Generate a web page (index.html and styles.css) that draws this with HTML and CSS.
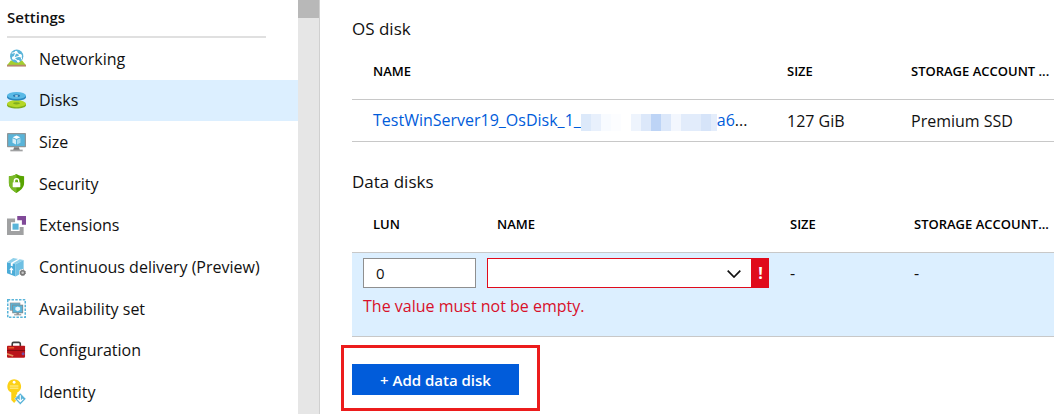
FILE: index.html
```html
<!DOCTYPE html>
<html lang="en">
<head>
  <meta charset="UTF-8">
  <meta name="viewport" content="width=device-width, initial-scale=1.0">
  <title>Disks</title>
  <link rel="stylesheet" href="styles.css">
</head>
<body>
  <div class="blade">
    <nav class="sidebar">
      <h2 class="sidebar-title">Settings</h2>
      <ul class="menu">
        <li>
          <a href="#" class="menu-item">
            <svg class="icon" viewBox="0 0 20 20">
              <path d="M0 17l4-5h12l4 5z" fill="#a4ce2e"/>
              <rect y="16.6" width="20" height="1.9" fill="#b58a68"/>
              <circle cx="10.2" cy="7.5" r="7" fill="#59b4d9"/>
              <path d="M5 4.500l4.500-1 5 3.500 1 4M9.500 3.500l-2.500 6 5 3.500M14.500 7l-7.500 2.500" fill="none" stroke="#fff" stroke-width="1.1"/>
              <circle cx="9.500" cy="3.500" r="1.600" fill="#fff"/>
              <circle cx="14" cy="7" r="1.700" fill="#fff"/>
              <circle cx="7" cy="9.500" r="1.800" fill="#fff"/>
              <circle cx="12" cy="13" r="1.300" fill="#fff"/>
            </svg>
            Networking
          </a>
        </li>
        <li>
          <a href="#" class="menu-item active">
            <svg class="icon" viewBox="0 0 20 20">
              <path d="M0 13.500v1.500c0 2 4.500 3.500 10 3.500s10-1.500 10-3.500v-1.500z" fill="#7fae1d"/>
              <ellipse cx="10" cy="13.300" rx="10" ry="3.700" fill="#b5d727"/>
              <ellipse cx="10" cy="13" rx="3.500" ry="1.200" fill="#7fae1d"/>
              <path d="M0 5v1.500c0 2 4.500 3.500 10 3.500s10-1.500 10-3.500v-1.500z" fill="#2a86bf"/>
              <ellipse cx="10" cy="4.800" rx="10" ry="3.700" fill="#59b9e6"/>
              <ellipse cx="10" cy="5" rx="3.600" ry="1.400" fill="#1c6fa8"/>
              <ellipse cx="10" cy="5.300" rx="2" ry=".7" fill="#cfeafa"/>
            </svg>
            Disks
          </a>
        </li>
        <li>
          <a href="#" class="menu-item">
            <svg class="icon" viewBox="0 0 20 20">
              <rect y="0" width="20" height="15" rx=".8" fill="#8f9699"/>
              <rect x="1.300" y="1.300" width="17.400" height="12.400" fill="#59b4d9"/>
              <path d="M7.500 15h5l1 3h-7z" fill="#7a7a7a"/>
              <rect x="3.500" y="17.500" width="13" height="1.800" fill="#a0a1a2"/>
              <path d="M10 2.600l4 1.900-4 1.900-4-1.900z" fill="#fff"/>
              <path d="M5.800 5.400l3.700 1.800v5l-3.700-2z" fill="#d5edf7"/>
              <path d="M14.200 5.400l-3.700 1.800v5l3.700-2z" fill="#a6d8ec"/>
            </svg>
            Size
          </a>
        </li>
        <li>
          <a href="#" class="menu-item">
            <svg class="icon" viewBox="0 0 20 20">
              <path d="M10 0c2.500 1.700 5 2.300 8 2.300v7.200c0 5-4 8-8 10.500-4-2.500-8-5.500-8-10.500V2.300c3 0 5.500-.6 8-2.300z" fill="#57a300"/>
              <path d="M10 0v20c-4-2.500-8-5.500-8-10.500V2.300c3 0 5.500-.6 8-2.300z" fill="#7ab929"/>
              <path d="M7.700 9V7.300a2.300 2.300 0 0 1 4.600 0V9" fill="none" stroke="#fff" stroke-width="1.500"/>
              <rect x="6" y="8.600" width="8" height="5.400" rx=".5" fill="#fff"/>
            </svg>
            Security
          </a>
        </li>
        <li>
          <a href="#" class="menu-item">
            <svg class="icon" viewBox="0 0 20 20">
              <path d="M0 2.500h8.500v4.200H4.200v9.100h9.100v-4.300h4.200V20H0z" fill="#a0a1a2"/>
              <rect x="5.800" y="8" width="6.400" height="6.400" fill="#59b4d9"/>
              <path d="M10.800 0H20v9.300h-4.300V4.400h-4.900z" fill="#804998"/>
            </svg>
            Extensions
          </a>
        </li>
        <li>
          <a href="#" class="menu-item">
            <svg class="icon" viewBox="0 0 20 20">
              <path d="M0 4.500l9 2v13L0 16z" fill="#4bacd8"/>
              <path d="M0 4.500L6.500 0l11 2L9 6.500z" fill="#8fd0ea"/>
              <path d="M9 6.500L17.500 2v13L9 19.500z" fill="#6fc0e3"/>
              <path d="M4 5.300L11.500 1l2 .4L6 5.700v3l-2-.5z" fill="#fff"/>
              <path d="M4.500 9.500L7 13H5.300v3.500l-1.500-.5v-3.500H2.500z" fill="#fff"/>
              <circle cx="16.500" cy="15.500" r="3.900" fill="#fff"/>
              <circle cx="16.500" cy="15.500" r="2.100" fill="#c8c8c8" stroke="#777" stroke-width="1.500"/>
              <circle cx="16.500" cy="15.500" r="3" fill="none" stroke="#777" stroke-width="1" stroke-dasharray="1.400 .950"/>
            </svg>
            Continuous delivery (Preview)
          </a>
        </li>
        <li>
          <a href="#" class="menu-item">
            <svg class="icon" viewBox="0 0 20 20">
              <rect x=".8" y=".8" width="18.400" height="18.400" fill="none" stroke="#59b4d9" stroke-width="1.600" stroke-dasharray="2.600 1.350"/>
              <rect x="3" y="3.800" width="11" height="8.500" fill="#8f9699"/>
              <rect x="3.800" y="4.600" width="9.500" height="7" fill="#59b4d9"/>
              <rect x="5.500" y="6" width="11.500" height="9" fill="#7f8b90"/>
              <rect x="6.400" y="6.900" width="9.700" height="7.200" fill="#59b4d9"/>
              <path d="M11.300 7.800l2.500 1.200v2.700l-2.500 1.300-2.500-1.300V9z" fill="#e6f5fb"/>
              <rect x="10" y="15" width="2.600" height="1.500" fill="#7a7a7a"/>
              <rect x="7.500" y="16" width="7.500" height="1.200" fill="#8f9699"/>
            </svg>
            Availability set
          </a>
        </li>
        <li>
          <a href="#" class="menu-item">
            <svg class="icon" viewBox="0 0 20 20">
              <path d="M5.500 6V3a1.500 1.500 0 0 1 1.500-1.500h5.500A1.500 1.500 0 0 1 14 3V6" fill="none" stroke="#3e3e3e" stroke-width="1.700"/>
              <rect y="5" width="19" height="12.500" rx=".8" fill="#ba141a"/>
              <path d="M0 9.500h19v1H0z" fill="#7d0c10"/>
              <path d="M1.500 6.500h6v1.300h-6z" fill="#f0692a"/>
              <path d="M0 12.500l7 2.500-1 1.500-6-2z" fill="#e38d5d"/>
              <circle cx="17" cy="13.500" r="1.600" fill="#7a4ea0"/>
            </svg>
            Configuration
          </a>
        </li>
        <li>
          <a href="#" class="menu-item">
            <svg class="icon icon-tall" viewBox="0 0 20 27">
              <path d="M7.500 0a7.400 7.400 0 0 1 3.200 14v1.500l-1.500 1.300 1.500 1.500-1.500 1.500 1.500 1.500L7.500 25l-3-3v-8A7.400 7.400 0 0 1 7.500 0z" fill="#fcd116"/>
              <circle cx="7.500" cy="3.200" r="1.500" fill="#fff"/>
              <path d="M3 7.200h9M3 9.500h9" stroke="#fff3a8" stroke-width="1"/>
              <path d="M14 14.500l6 6.200-6 6.200-6-6.200z" fill="#59b4d9" stroke="#fff" stroke-width=".6"/>
              <path d="M14 17v7M11 20.700l3 3 3-3" fill="none" stroke="#fff" stroke-width="1.200"/>
            </svg>
            Identity
          </a>
        </li>
      </ul>
    </nav>

    <div class="scrollbar"><div class="scrollbar-thumb"></div></div>

    <main class="content">
      <h3 class="section-title">OS disk</h3>
      <table class="grid">
        <thead>
          <tr>
            <th>NAME</th>
            <th class="col-size">SIZE</th>
            <th class="col-storage">STORAGE ACCOUNT ...</th>
          </tr>
        </thead>
        <tbody>
          <tr class="disk-row">
            <td><a href="#">TestWinServer19_OsDisk_1_<span class="redacted"></span>a6</a>...</td>
            <td>127 GiB</td>
            <td>Premium SSD</td>
          </tr>
        </tbody>
      </table>

      <h3 class="section-title">Data disks</h3>
      <table class="grid data-disks">
        <thead>
          <tr>
            <th class="col-lun">LUN</th>
            <th>NAME</th>
            <th class="col-size">SIZE</th>
            <th class="col-storage">STORAGE ACCOUNT...</th>
          </tr>
        </thead>
        <tbody class="editing">
          <tr>
            <td class="field-cell"><input class="lun-input" type="text" value="0" aria-label="LUN"></td>
            <td class="field-cell">
              <div class="combo">
                <select class="combo-select" aria-label="Name"><option value=""></option></select>
                <svg class="combo-arrow" viewBox="0 0 14 8"><path d="M.7.700L7 7 13.300.700" fill="none" stroke="#111" stroke-width="1.700"/></svg>
                <span class="combo-error">!</span>
              </div>
            </td>
            <td>-</td>
            <td>-</td>
          </tr>
          <tr>
            <td class="error-text" colspan="4">The value must not be empty.</td>
          </tr>
        </tbody>
      </table>

      <div class="callout">
        <button class="add-button" type="button">+ Add data disk</button>
      </div>
    </main>
  </div>
</body>
</html>
```

FILE: styles.css
```css
* {
  box-sizing: border-box;
}
body {
  margin: 0;
  font-family: "Segoe UI", "Open Sans", "Noto Sans", sans-serif;
  font-size: 16px;
  line-height: 20px;
  color: #111;
  background-color: #fff;
}
a {
  color: #015cda;
  text-decoration: none;
}
.blade {
  display: flex;
  min-height: 100vh;
}

/* Sidebar */
.sidebar {
  display: flex;
  flex-direction: column;
  flex: 0 0 298px;
  padding-bottom: 1px;
}
.sidebar-title {
  margin: 0 32px 0 7px;
  padding: 7px 0 9px;
  border-bottom: 2px solid #e0e0e0;
  font-size: 15px;
  font-weight: 600;
}
.menu {
  display: grid;
  grid-auto-rows: 1fr;
  flex: 1;
  margin: 0;
  padding: 0;
  list-style: none;
}
.menu-item {
  display: flex;
  align-items: center;
  gap: 13px;
  height: 100%;
  padding-left: 7px;
  color: #111;
}
.menu-item.active {
  background-color: #dcefff;
}
.icon {
  flex: none;
  width: 19px;
  height: 19px;
}
.icon-tall {
  height: 26px;
}
.scrollbar {
  flex: 0 0 22px;
  border-right: 1px solid #d0d0d0;
  background-color: #e6e6e6;
}
.scrollbar-thumb {
  height: 18px;
  background-color: #b8b8b8;
}

/* Content */
.content {
  flex: 1;
  min-width: 0;
  padding: 14px 0 0 32px;
}
.section-title {
  margin: 0;
  font-size: 17px;
  font-weight: 400;
  line-height: 30px;
}
.grid {
  width: 100%;
  margin-bottom: 25px;
  border-spacing: 0;
  table-layout: fixed;
}
.grid th,
.grid td {
  padding: 0 0 0 21px;
  text-align: left;
  white-space: nowrap;
}
.grid th {
  height: 56px;
  padding-bottom: 2px;
  border-bottom: 1px solid #c8c8c8;
  font-size: 13px;
  font-weight: 600;
  color: #000;
}
.col-lun,
.col-size {
  width: 124px;
}
.col-storage {
  width: 164px;
}
.disk-row td {
  height: 42px;
  border-bottom: 1px solid #c8c8c8;
}
.redacted {
  display: inline-block;
  width: 136px;
  height: 17px;
  vertical-align: middle;
  background: linear-gradient(to right,
    #dce9fa 0 10px, #e8f0fc 10px 20px, #f8fbff 20px 30px, #fcfdff 30px 40px,
    #fff 40px 50px, #eef4fd 50px 60px, #dce8fa 60px 70px, #bdd4f6 70px 80px,
    #dce8fa 80px 90px, #f3f7fe 90px 100px, #e2ecfb 100px 120px,
    #d6e4f9 120px 130px, #e4edfb 130px);
}
.data-disks {
  margin-bottom: 27px;
}
.data-disks .col-storage {
  width: 161px;
}
.editing {
  background-color: #dcefff;
}
.editing td {
  height: 40px;
}
.editing .field-cell {
  padding-left: 11px;
}
.lun-input {
  display: block;
  width: 100%;
  height: 30px;
  padding: 0 12px;
  border: 1px solid #8f8f8f;
  font: inherit;
  font-size: 15px;
  color: #111;
  background-color: #fff;
}
.combo {
  display: flex;
  position: relative;
  height: 30px;
}
.combo-select {
  flex: 1;
  min-width: 0;
  padding: 0 36px 0 12px;
  border: 1px solid #e00b1c;
  border-radius: 0;
  appearance: none;
  font: inherit;
  background-color: #fff;
}
.combo-arrow {
  position: absolute;
  top: 12px;
  right: 28px;
  width: 14px;
  height: 8px;
  pointer-events: none;
}
.combo-error {
  width: 17px;
  font-weight: 700;
  line-height: 30px;
  text-align: center;
  color: #fff;
  background-color: #e00b1c;
}
.editing .error-text {
  height: 44px;
  padding: 3px 0 0 11px;
  border-bottom: 1px solid #c8c8c8;
  vertical-align: top;
  color: #d8102a;
}
.callout {
  display: inline-block;
  position: relative;
}
.callout::after {
  content: "";
  position: absolute;
  inset: -19px -21px -16px -11px;
  border: 3px solid #ec1c1c;
  pointer-events: none;
}
.add-button {
  display: block;
  height: 31px;
  padding: 0 28px;
  border: none;
  font: inherit;
  font-size: 15px;
  font-weight: 600;
  color: #fff;
  background-color: #015cda;
}
```
